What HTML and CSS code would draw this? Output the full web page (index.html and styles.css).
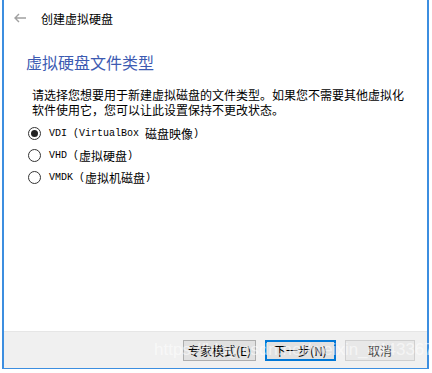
FILE: index.html
```html
<!DOCTYPE html>
<html lang="zh-CN">
<head>
    <meta charset="UTF-8">
    <title>创建虚拟硬盘</title>
    <link rel="stylesheet" href="styles.css">
</head>
<body>
    <div class="window">
        <div class="titlebar">
            <svg class="back" width="14" height="10" viewBox="0 0 14 10">
                <path d="M13 5H2M6 1L2 5l4 4" fill="none" stroke="#a0a0a0" stroke-width="1.4"/>
            </svg>
            <span class="title">创建虚拟硬盘</span>
        </div>
        <div class="content">
            <h2>虚拟硬盘文件类型</h2>
            <p class="desc">请选择您想要用于新建虚拟磁盘的文件类型。如果您不需要其他虚拟化<br>软件使用它，您可以让此设置保持不更改状态。</p>
            <div class="options">
                <label class="option"><span class="radio checked"></span><span class="mono">VDI (VirtualBox </span>磁盘映像<span class="mono">)</span></label>
                <label class="option"><span class="radio"></span><span class="mono">VHD (</span>虚拟硬盘<span class="mono">)</span></label>
                <label class="option"><span class="radio"></span><span class="mono">VMDK (</span>虚拟机磁盘<span class="mono">)</span></label>
            </div>
        </div>
        <div class="footer">
            <button class="btn expert">专家模式(E)</button>
            <button class="btn next">下一步(N)</button>
            <button class="btn cancel">取消</button>
            <span class="watermark">https://blog.csdn.net/weixin_44433678</span>
        </div>
    </div>
</body>
</html>
```

FILE: styles.css
```css
body {
    margin: 0;
    background: #fff;
    font-family: "Noto Sans CJK SC", sans-serif;
    color: #000;
}
.window {
    margin-left: 2px;
    width: 423px;
    height: 368px;
    border-left: 2px solid #3c8ee0;
    border-right: 2px solid #3c8ee0;
    border-bottom: 1px solid #3c8ee0;
    display: flex;
    flex-direction: column;
}
.titlebar {
    height: 36px;
    display: flex;
    align-items: center;
    padding-left: 9px;
}
.back {
    margin-right: 14px;
}
.title {
    font-size: 12px;
}
.content {
    flex: 1;
    padding: 16px 0 0 22px;
}
h2 {
    margin: 0;
    font-size: 16px;
    font-weight: normal;
    color: #3d5bb2;
    line-height: 20px;
}
.desc {
    margin: 15px 0 0 6px;
    font-size: 12px;
    line-height: 15px;
}
.options {
    margin: 8px 0 0 0;
    display: flex;
    flex-direction: column;
    gap: 6px;
}
.option {
    display: flex;
    align-items: center;
    height: 16px;
    font-size: 12px;
    white-space: pre;
}
.mono {
    font-family: "Liberation Mono", monospace;
    font-size: 10px;
}
.radio {
    width: 11px;
    height: 11px;
    border: 1px solid #333;
    border-radius: 50%;
    margin: 0 8px 0 2px;
    display: flex;
    align-items: center;
    justify-content: center;
}
.radio.checked::after {
    content: "";
    width: 7px;
    height: 7px;
    border-radius: 50%;
    background: #222;
}
.footer {
    position: relative;
    height: 36px;
    background: #f0f0f0;
    border-top: 1px solid #e6e6e6;
    display: flex;
    align-items: center;
    justify-content: flex-end;
    gap: 9px;
    padding-right: 12px;
}
.btn {
    height: 21px;
    padding: 0;
    font-family: "Noto Sans CJK SC", sans-serif;
    font-size: 12px;
    background: #e1e1e1;
    border: 1px solid #adadad;
    color: #000;
}
.expert {
    width: 73px;
}
.next {
    width: 71px;
    border: 2px solid #0078d7;
}
.cancel {
    width: 70px;
    background: #e8e8e8;
    border-color: #cfcfcf;
    color: #444;
}
.watermark {
    position: absolute;
    left: 150px;
    top: 8px;
    font-family: "Liberation Sans", sans-serif;
    font-size: 17px;
    color: rgba(255, 255, 255, 0.55);
    pointer-events: none;
}
```
